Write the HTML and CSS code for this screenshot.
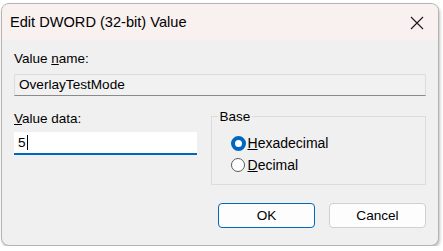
FILE: index.html
```html
<!DOCTYPE html>
<html lang="en">
<head>
    <meta charset="UTF-8">
    <title>Edit DWORD (32-bit) Value</title>
    <link rel="stylesheet" href="styles.css">
</head>
<body>
    <div class="dialog">
        <div class="titlebar">
            <span class="title">Edit DWORD (32-bit) Value</span>
            <span class="close">
                <svg width="16" height="16" viewBox="0 0 16 16">
                    <path d="M2 2 L14 14 M14 2 L2 14" stroke="#1a1a1a" stroke-width="1.1" fill="none"/>
                </svg>
            </span>
        </div>
        <div class="content">
            <div class="label">Value <u>n</u>ame:</div>
            <div class="namefield">OverlayTestMode</div>
            <div class="row">
                <div class="datacol">
                    <div class="label"><u>V</u>alue data:</div>
                    <div class="datafield">5<span class="caret"></span></div>
                </div>
                <fieldset class="group">
                    <legend>Base</legend>
                    <div class="radio">
                        <span class="dot checked"></span>
                        <span><u>H</u>exadecimal</span>
                    </div>
                    <div class="radio">
                        <span class="dot"></span>
                        <span><u>D</u>ecimal</span>
                    </div>
                </fieldset>
            </div>
            <div class="buttons">
                <div class="btn primary">OK</div>
                <div class="btn">Cancel</div>
            </div>
        </div>
    </div>
</body>
</html>
```

FILE: styles.css
```css
body {
    margin: 0;
    background-color: #ffffff;
    font-family: 'Liberation Sans', Arial, sans-serif;
    color: #000;
}
.dialog {
    margin: 3px 0 0 1px;
    width: 438px;
    height: 243px;
    box-sizing: border-box;
    background-color: #f0f0f0;
    border: 1px solid #b4b4b4;
    border-radius: 8px;
    box-shadow: 1px 2px 3px rgba(0, 0, 0, 0.25);
    overflow: hidden;
}
.titlebar {
    height: 36px;
    background-color: #f9f0f0;
    display: flex;
    align-items: center;
    justify-content: space-between;
    padding: 0 13px 0 8px;
}
.title {
    font-size: 14.6px;
}
.close {
    display: flex;
    padding-top: 2px;
}
.content {
    padding: 11px 12px 0 12px;
}
.label {
    font-size: 13.5px;
    line-height: 15px;
}
.label u {
    text-decoration-thickness: 1px;
}
.namefield {
    margin-top: 8px;
    height: 22px;
    width: 412px;
    box-sizing: border-box;
    border: 1px solid #dcdcdc;
    border-bottom-color: #8a8a8a;
    background-color: #f1f1f1;
    font-size: 13.6px;
    line-height: 20px;
    padding-left: 4px;
}
.row {
    display: flex;
    margin-top: 13px;
}
.datacol {
    width: 183px;
    padding-top: 2px;
}
.datafield {
    margin-top: 6px;
    height: 23px;
    box-sizing: border-box;
    background-color: #fff;
    border-bottom: 2px solid #0067c0;
    font-size: 13.6px;
    line-height: 21px;
    padding-left: 4px;
    display: flex;
    align-items: center;
}
.caret {
    display: inline-block;
    width: 1px;
    height: 15px;
    background-color: #000;
    margin-left: 1px;
}
.group {
    margin: 0 0 0 14px;
    width: 216px;
    height: 76px;
    box-sizing: border-box;
    border: 1px solid #dcdcdc;
    padding: 8px 0 0 19px;
}
.group legend {
    font-size: 13.5px;
    padding: 0 2px;
    margin-left: -13px;
}
.radio {
    display: flex;
    align-items: center;
    font-size: 14px;
    height: 22px;
}
.dot {
    width: 14px;
    height: 14px;
    border: 1px solid #5a5a5a;
    border-radius: 50%;
    background-color: #fff;
    margin-right: 3px;
    box-sizing: border-box;
    display: inline-block;
}
.dot.checked {
    border: 4px solid #0067c0;
    width: 15px;
    height: 15px;
    margin-right: 2px;
}
.buttons {
    display: flex;
    justify-content: flex-end;
    gap: 14px;
    margin-top: 18px;
    padding-right: 0;
}
.btn {
    width: 97px;
    height: 25px;
    box-sizing: border-box;
    background-color: #fdfdfd;
    border: 1px solid #d0d0d0;
    border-radius: 4px;
    font-size: 13.6px;
    text-align: center;
    line-height: 23px;
}
.btn.primary {
    border-color: #0067c0;
}
```
